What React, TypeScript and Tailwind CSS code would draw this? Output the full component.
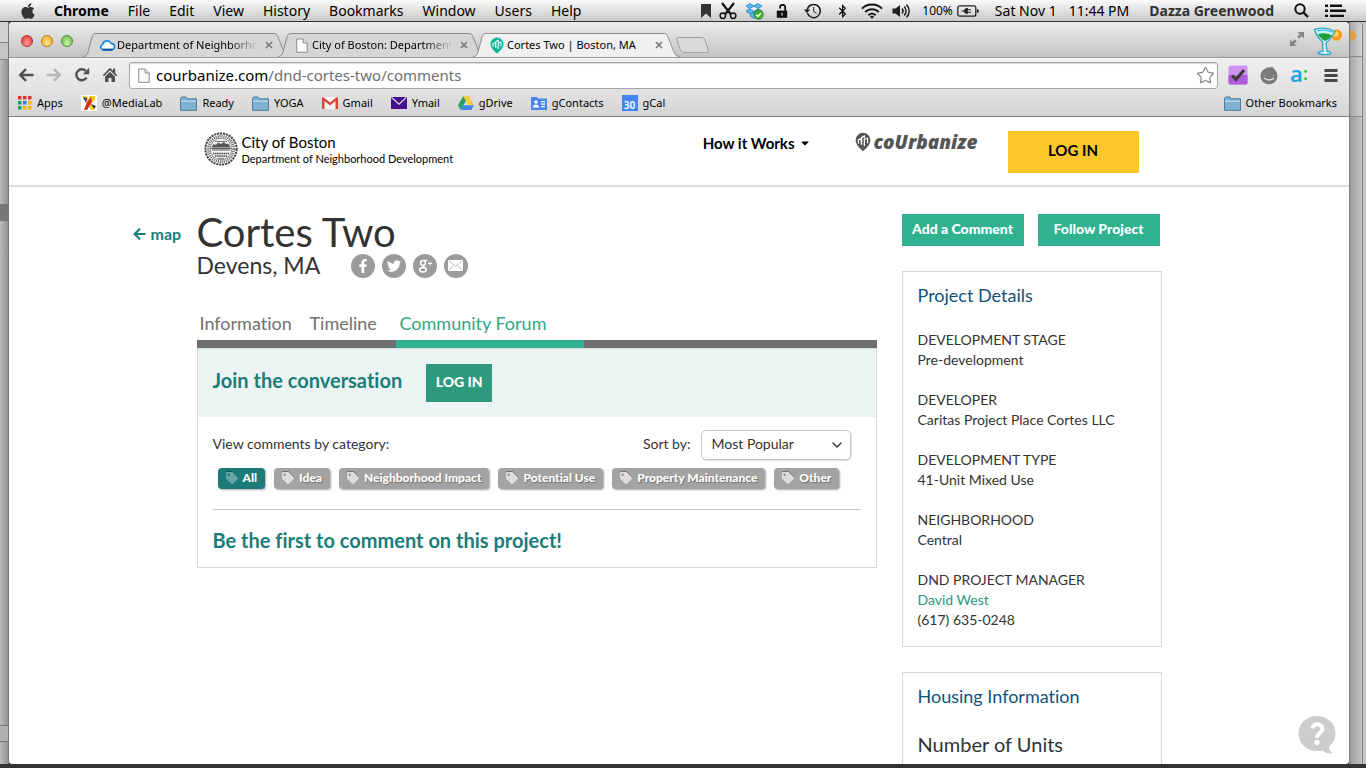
import type { ReactNode } from "react";
import { FaApple, FaArrowLeft, FaBluetoothB, FaCaretDown, FaFacebookF, FaTag, FaTwitter } from "react-icons/fa";
import { ChevronDown, Star } from "lucide-react";

const systemFont = "font-['Noto_Sans',sans-serif]";
const siteFont = "font-[Lato,sans-serif]";

/* ---------- menu bar ---------- */

const menus = ["File", "Edit", "View", "History", "Bookmarks", "Window", "Users", "Help"];

function ScissorsIcon() {
  return (
    <svg viewBox="0 0 18 18" className="h-[18px] w-[18px]" fill="none" stroke="#111">
      <path d="M3 1 L11.6 12 M15 1 L6.4 12" strokeWidth="2.2" />
      <circle cx="3.8" cy="13.8" r="2.7" strokeWidth="1.5" />
      <circle cx="14.2" cy="13.8" r="2.7" strokeWidth="1.5" />
    </svg>
  );
}

function DropboxIcon() {
  return (
    <svg viewBox="0 0 19 18" className="h-[18px] w-[19px]">
      <g fill="#5cbcf0" stroke="#1b83c9" strokeWidth=".8">
        <path d="M5 1.5 9 4 4.6 6.6 1 4z" />
        <path d="M12.5 1.5 8.8 4l4.4 2.6L17 4z" />
        <path d="M4.6 6.8 9 9.6 5.2 12 1 9.2z" />
        <path d="M13.2 6.8 8.8 9.6l3.8 2.4L17 9.2z" />
        <path d="M5.2 12.6 9 10.3l3.6 2.3v1.6L9 16.5l-3.8-2.3z" />
      </g>
      <path d="M6.500 6 L11.500 6 L9 7.800z" fill="#e4f5fd" />
      <circle cx="13.6" cy="12.6" r="4.7" fill="#3fae2a" stroke="#27801a" strokeWidth=".7" />
      <path d="M11.2 12.7l1.8 1.8 3-3.4" fill="none" stroke="#fff" strokeWidth="1.5" />
    </svg>
  );
}

function UnlockIcon() {
  return (
    <svg viewBox="0 0 12 14" className="h-[14px] w-[12px]">
      <path d="M.8 6.600h10.400v7.200H.8z" fill="#111" />
      <path d="M4 4.600V3.400A2.500 2.500 0 0 1 9.200 3.400V7" fill="none" stroke="#111" strokeWidth="1.800" />
      <path d="M5.400 9h1.200v2.600H5.400z" fill="#ddd" />
    </svg>
  );
}

function TimeMachineIcon() {
  return (
    <svg viewBox="0 0 18 16" className="h-[16px] w-[18px]" fill="none" stroke="#1a1a1a">
      <path d="M3.400 10.200A6.600 6.600 0 1 0 3.200 6.600" strokeWidth="1.500" />
      <path d="M0 6.400h6L3 10.2z" fill="#1a1a1a" stroke="none" />
      <path d="M9.7 4v4.400l2.800 2" strokeWidth="1" />
    </svg>
  );
}

function WifiIcon() {
  return (
    <svg viewBox="0 0 22 16" className="h-[16px] w-[22px]" fill="none" stroke="#111" strokeWidth="2">
      <path d="M1 5.600a14.400 14.400 0 0 1 20 0" />
      <path d="M4.200 9a9.800 9.800 0 0 1 13.600 0" />
      <path d="M7.400 12.200a5.200 5.200 0 0 1 7.200 0" />
      <path d="M11 15.800 9 13.800a2.900 2.900 0 0 1 4 0z" fill="#111" stroke="none" />
    </svg>
  );
}

function SoundIcon() {
  return (
    <svg viewBox="0 0 19 16" className="h-[16px] w-[19px]" fill="none" stroke="#222">
      <path d="M.5 5.400h3L8 2v12L3.500 10.600H.500z" fill="#222" stroke="none" />
      <path d="M10 5.600a3.500 3.500 0 0 1 0 4.800" strokeWidth="1.500" />
      <path d="M12.200 3.600a6.200 6.200 0 0 1 0 8.800" strokeWidth="1.500" />
      <path d="M14.500 1.600a9 9 0 0 1 0 12.800" strokeWidth="1.500" />
    </svg>
  );
}

function BatteryIcon() {
  return (
    <svg viewBox="0 0 22 12" className="h-[12px] w-[22px]">
      <rect x=".8" y=".8" width="18" height="10.400" rx="2" fill="none" stroke="#222" strokeWidth="1.300" />
      <path d="M20 4v4c1.300 0 1.800-1 1.800-2S21.300 4 20 4z" fill="#222" />
      <path d="M4.500 5.400h2.400C7.600 3.500 9 3 10.800 3V4.300H14v1H10.800v1.400H14v1H10.800V9C9 9 7.600 8.500 6.900 6.600H4.500z" fill="#222" />
    </svg>
  );
}

function MenuBar() {
  return (
    <header className={`${systemFont} flex h-[22px] shrink-0 items-center border-b border-[#2c3036] bg-linear-to-b from-[#fafafa] to-[#c9c9c9] pr-5 pl-5 text-sm leading-5 whitespace-nowrap text-black`}>
      <FaApple className="h-[18px] w-[16px] shrink-0 text-[#333]" aria-hidden />
      <nav className="ml-[18px] flex gap-[19px]">
        <button className="font-bold">Chrome</button>
        {menus.map((m) => (
          <button key={m}>{m}</button>
        ))}
      </nav>
      <div className="ml-auto flex items-center">
        <svg viewBox="0 0 10 14" className="h-[14px] w-[10px]"><path d="M0 0h10v14L5 9.500 0 14z" fill="#333" /></svg>
        <span className="ml-2"><ScissorsIcon /></span>
        <span className="ml-2"><DropboxIcon /></span>
        <span className="ml-3"><UnlockIcon /></span>
        <span className="ml-4"><TimeMachineIcon /></span>
        <FaBluetoothB className="ml-[15px] h-[14px] w-[11px]" aria-hidden />
        <span className="ml-[13px]"><WifiIcon /></span>
        <span className="ml-[9px]"><SoundIcon /></span>
        <span className="ml-[11px] text-xs">100%</span>
        <span className="ml-1"><BatteryIcon /></span>
        <span className="ml-4">Sat Nov 1</span>
        <span className="ml-3">11:44 PM</span>
        <button className="ml-5 font-bold text-[#333]">Dazza Greenwood</button>
        <svg viewBox="0 0 15 15" className="ml-5 h-[15px] w-[15px]" fill="none" stroke="#111" strokeWidth="2">
          <circle cx="6" cy="6" r="4.700" />
          <path d="M9.400 9.400 14 14" strokeWidth="2.400" />
        </svg>
        <svg viewBox="0 0 21 14" className="ml-4 h-[14px] w-[21px]" fill="#111">
          <path d="M0 .5h3v2.400H0zM5 .5h12v2.400H5zM0 5.600h3V8H0zM5 5.600h16V8H5zM0 10.700h3v2.400H0zM5 10.700h14v2.400H5z" />
        </svg>
      </div>
    </header>
  );
}

/* ---------- browser chrome ---------- */

function PageIcon() {
  return (
    <svg viewBox="0 0 12 15" className="h-[15px] w-[12px] shrink-0">
      <path d="M.7 1h6.500l4 4v9.300H.7z" fill="#fbfbfb" stroke="#8b8b8b" />
      <path d="M7.200 1v4h4" fill="#e4e4e4" stroke="#8b8b8b" />
    </svg>
  );
}

function CloudIcon() {
  return (
    <svg viewBox="0 0 17 12" className="h-[12px] w-[17px] shrink-0">
      <path d="M3.800 10.700A2.700 2.700 0 0 1 3.600 5.500 4.600 4.600 0 0 1 12.200 4.300a3.300 3.300 0 0 1 1.200 6.400z" fill="#fff" stroke="#1d8fe0" strokeWidth="1.800" />
      <path d="M3.500 10.700h10" stroke="#12539c" strokeWidth="2" />
    </svg>
  );
}

function PinMark({ className, fill, line }: { className: string; fill: string; line: string }) {
  return (
    <svg viewBox="0 0 14 17" className={className}>
      <path d="M7 .5A6.500 6.500 0 0 1 13.500 7c0 3.600-3.500 7-6.500 9.500C4 14 .5 10.600.5 7A6.500 6.500 0 0 1 7 .5z" fill={fill} />
      <path d="M3 10V6.500l2.500-1V10M5.800 11V4.500l2.400-1.300V5M8.200 12V6l2.800-.8V9.500" fill="none" stroke={line} strokeWidth="1.100" />
    </svg>
  );
}

function BrowserTab({ title, icon, active = false }: { title: string; icon: ReactNode; active?: boolean }) {
  return (
    <div className={active ? "relative z-10 -ml-3 flex h-[24px] w-[207px] items-center pr-[17px] pl-4" : "relative -ml-3 flex h-[24px] w-[207px] items-center pr-[17px] pl-4"}>
      <svg viewBox="0 0 207 24" preserveAspectRatio="none" className="absolute inset-0 h-full w-full" aria-hidden>
        <path d="M0 24C3 24 4 22 5 19L9 4C10 1 11 .5 14 .5H190C193 .5 194 1 195 4L201 19C202 22 204 24 207 24z" fill={active ? "#f0f0f0" : "#d6d6d6"} />
        <path d="M0 23.500C3 23.500 4 22 5 19L9 4C10 1 11 .5 14 .5H190C193 .5 194 1 195 4L201 19C202 22 204 23.500 207 23.500" fill="none" stroke="#8e8e8e" />
      </svg>
      <span className="relative flex w-4 shrink-0 justify-center">{icon}</span>
      <span className={active ? "relative ml-[2px] flex-1 text-[11px] whitespace-nowrap" : "relative ml-[2px] flex-1 mask-r-from-80% text-[11px] whitespace-nowrap"}>{title}</span>
      <button aria-label={`Close ${title}`} className="relative ml-[7px] shrink-0">
        <svg viewBox="0 0 8 8" className="h-2 w-2" stroke="#777" strokeWidth="1.500"><path d="M1 1l6 6M7 1L1 7" /></svg>
      </button>
    </div>
  );
}

function CocktailIcon() {
  return (
    <svg viewBox="0 0 30 30" className="h-[30px] w-[30px]">
      <circle cx="23.500" cy="9" r="5.500" fill="#f79a16" />
      <circle cx="22.500" cy="8" r="3" fill="#ffd24d" />
      <path d="M1.500 3.500 Q12 0 22 5.500 Q18 13 13 17 L14 25 Q19 26 17 28 Q11 29.500 5 27.500 Q5 25.500 10 25 L9.500 16 Q3 10 1.500 3.500z" fill="#c8f3fa" stroke="#36a9c9" strokeWidth="1.400" />
      <path d="M5 8 Q13 6 19 9.500 Q15 14 12 15 Q7 12.500 5 8z" fill="#1f9d3c" />
      <path d="M4 4.800 Q12 2.800 19.500 6.200" fill="none" stroke="#3fc1e0" strokeWidth="1.300" />
    </svg>
  );
}

function TabStrip() {
  return (
    <div className="flex h-[36px] shrink-0 items-end border-b border-[#989898] bg-linear-to-b from-[#ededed] to-[#c3c3c3]">
      <div className="flex w-[86px] shrink-0 gap-2 self-start pt-[13px] pl-3">
        <span className="h-3 w-3 rounded-full border border-[#b3302f] bg-radial-[at_50%_75%] from-[#ff9d95] to-[#df2f30]" />
        <span className="h-3 w-3 rounded-full border border-[#bb7c18] bg-radial-[at_50%_75%] from-[#ffe88e] to-[#f0a21d]" />
        <span className="h-3 w-3 rounded-full border border-[#4b8f36] bg-radial-[at_50%_75%] from-[#c7f5a8] to-[#5cb848]" />
      </div>
      <div className="flex flex-1">
        <BrowserTab title="Department of Neighborho" icon={<CloudIcon />} />
        <BrowserTab title="City of Boston: Department" icon={<PageIcon />} />
        <BrowserTab title="Cortes Two | Boston, MA" icon={<PinMark className="h-[17px] w-[14px] shrink-0" fill="#10b394" line="#fff" />} active />
        <button aria-label="New tab" className="-ml-[5px] mt-1 self-start">
          <svg viewBox="0 0 34 16" className="h-4 w-[34px]"><path d="M2 3C1 1 2 .5 4 .5H26C28 .5 29 1 30 3L33 12C34 14.500 33 15.500 31 15.500H10C7.500 15.500 6 14.500 5 12z" fill="#d9dbda" stroke="#9c9c9c" /></svg>
        </button>
      </div>
      <svg viewBox="0 0 16 16" className="mb-[10px] h-4 w-4" fill="#858585">
        <path d="M8.500 1H15v6.500L12.700 5.200 10.200 7.700 8.300 5.800 10.800 3.300zM7.500 15H1V8.500L3.300 10.800 5.800 8.300 7.700 10.200 5.200 12.700z" />
      </svg>
      <span className="mr-[6px] mb-[1px] ml-2"><CocktailIcon /></span>
    </div>
  );
}

function NavArrow({ className, label }: { className: string; label: string }) {
  return (
    <button aria-label={label} className={className}>
      <svg viewBox="0 0 16 14" className="h-[14px] w-[16px]" fill="none" stroke="currentColor" strokeWidth="2.400"><path d="M15.500 7H3M8 1.200 2.200 7 8 12.800" /></svg>
    </button>
  );
}

function Toolbar() {
  return (
    <div className="flex h-8 shrink-0 items-center border-t border-[#f6f6f6] bg-linear-to-b from-[#efefef] to-[#e2e2e2] pt-[1px] pr-[11px] pl-[9px]">
      <NavArrow label="Back" className="text-[#505050]" />
      <NavArrow label="Forward" className="ml-3 rotate-180 text-[#b5b5b5]" />
      <button aria-label="Reload" className="ml-3 text-[#505050]">
        <svg viewBox="0 0 16 16" className="h-4 w-4"><path d="M12.600 10.500A5.500 5.500 0 1 1 11.800 4" fill="none" stroke="currentColor" strokeWidth="2.400" /><path d="M15.200.8V7.200H8.800z" fill="currentColor" /></svg>
      </button>
      <button aria-label="Home" className="ml-3 text-[#505050]">
        <svg viewBox="0 0 16 16" className="h-4 w-4" fill="currentColor"><path d="M8 .8 .8 8.300 2 9.300 8 3.200l6 6.100 1.200-1L13.200 6V1.500H11V3.800zM3 9.800 8 4.800l5 5V15H9.500V11h-3v4H3z" /></svg>
      </button>
      <div className="ml-[11px] flex h-[27px] flex-1 items-center rounded-[3px] border border-[#a8a8a8] bg-white pr-[2px] pl-2 shadow-[inset_0_1px_1px_rgba(0,0,0,0.15)]">
        <PageIcon />
        <span className="relative ml-[6px] flex flex-1 text-[15px] leading-5 text-black">
          <span aria-hidden>courbanize.com<span className="text-[#6f6f6f]">/dnd-cortes-two/comments</span></span>
          <input className="absolute inset-0 w-full bg-transparent text-transparent outline-none" type="text" aria-label="Address" />
        </span>
        <Star className="h-[19px] w-[19px] text-[#858585]" strokeWidth={1.5} aria-hidden />
      </div>
      <button aria-label="Tasks extension" className="ml-[10px]">
        <svg viewBox="0 0 20 20" className="h-5 w-5"><rect x=".5" y=".5" width="19" height="19" rx="2" fill="#cf92ee" /><path d="M.5 10h19v8a1.500 1.500 0 0 1-1.500 1.500H2A1.500 1.500 0 0 1 .5 18z" fill="#b25be0" /><path d="M4 10.500 8 14.500 16 5" fill="none" stroke="#3b3b3b" strokeWidth="3" /></svg>
      </button>
      <button aria-label="Face extension" className="ml-3">
        <svg viewBox="0 0 18 19" className="h-[19px] w-[18px]"><path d="M9 1C10 2 11 1.500 12 .5 12.500 2 17.500 4.500 17.500 10.500A8.500 7.800 0 0 1 .5 10.500C.5 5 5 2 9 1z" fill="#7a7a7a" /><path d="M4 12q5 4 10 0" fill="none" stroke="#e2e2e2" strokeWidth="1.300" /><path d="M3.500 9.500h2M12.500 9.500h2" stroke="#a5a5a5" /></svg>
      </button>
      <button className="ml-3 flex w-[20px] items-center pb-1 text-[22px] leading-5 font-semibold text-[#1fa6df]">a<span className="text-lg text-[#37c32c]">:</span></button>
      <button aria-label="Chrome menu" className="ml-[14px]">
        <svg viewBox="0 0 14 13" className="h-[13px] w-[14px]" fill="#484848"><path d="M.5 0h13v3H.5zM.5 5h13v3H.5zM.5 10h13v3H.5z" /></svg>
      </button>
    </div>
  );
}

function FolderIcon() {
  return (
    <svg viewBox="0 0 17 15" className="h-[15px] w-[17px]">
      <path d="M.5 14.300V2.500L1.500 1H6l1 1.800h9.500V14.300z" fill="#82b0d0" stroke="#4f7f9f" />
      <path d="M1 4.500h15v1.500H1z" fill="#b4d2e5" />
    </svg>
  );
}

function AppsIcon() {
  const colours = ["#e8302b", "#e8302b", "#e8302b", "#18a05f", "#3b78e7", "#f5b400", "#18a05f", "#f5b400", "#f5b400"];
  return (
    <svg viewBox="0 0 14 14" className="h-[14px] w-[14px]">
      {colours.map((c, i) => (
        <rect key={i} x={(i % 3) * 5} y={Math.floor(i / 3) * 5} width="3.500" height="3.500" fill={c} />
      ))}
    </svg>
  );
}

function MediaLabIcon() {
  return (
    <svg viewBox="0 0 16 16" className="h-4 w-4">
      <rect width="16" height="16" fill="#fff" />
      <path d="M1 1h5l8 14h-4z" fill="#f4d91b" />
      <path d="M8 1h6v4L9 9z" fill="#f6c915" />
      <path d="M6 7l4-5 1 5-5 8H3z" fill="#de2c22" />
      <path d="M2 2l4 1-1 5z" fill="#2c3b8b" />
      <path d="M10 9l5 2-2 3z" fill="#333" />
    </svg>
  );
}

function GmailIcon() {
  return (
    <svg viewBox="0 0 16 12" className="h-3 w-4">
      <rect width="16" height="12" rx="1" fill="#f4f4f4" />
      <path d="M0 1.200C0 .3 1 0 1.800.5L8 5.600 14.200.5C15 0 16 .3 16 1.200V12h-2.500V4L8 8.400 2.500 4V12H0z" fill="#dc4437" />
    </svg>
  );
}

function YmailIcon() {
  return (
    <svg viewBox="0 0 16 12" className="h-3 w-4">
      <rect width="16" height="12" fill="#45108b" />
      <path d="M.5.300 8 7.300 15.500.300" fill="none" stroke="#ddd" strokeWidth="1.200" />
    </svg>
  );
}

function DriveIcon() {
  return (
    <svg viewBox="0 0 16 14" className="h-[14px] w-4">
      <path d="M5.300 0 0 9.200 2.700 14 8 4.700z" fill="#21a464" />
      <path d="M5.300 0h5.400L16 9.200h-5.400z" fill="#fbcb38" />
      <path d="M5.400 9.200H16L13.300 14H2.700z" fill="#4284f2" />
    </svg>
  );
}

function ContactsIcon() {
  return (
    <svg viewBox="0 0 16 14" className="h-[14px] w-4">
      <path d="M0 1h6l1 1.500h9V14H0z" fill="#4a86ee" />
      <circle cx="5" cy="6" r="1.700" fill="#fff" />
      <path d="M2 11.500c0-4 6-4 6 0zM10 5h4v1.200h-4zM10 7.500h4v1.200h-4zM10 10h4v1.200h-4z" fill="#fff" />
    </svg>
  );
}

function CalendarIcon() {
  return (
    <span className="flex h-4 w-4 items-end justify-center bg-[#4285f4] text-[10px] leading-3 font-semibold text-white">30</span>
  );
}

const bookmarks: { label: string; icon: ReactNode }[] = [
  { label: "Apps", icon: <AppsIcon /> },
  { label: "@MediaLab", icon: <MediaLabIcon /> },
  { label: "Ready", icon: <FolderIcon /> },
  { label: "YOGA", icon: <FolderIcon /> },
  { label: "Gmail", icon: <GmailIcon /> },
  { label: "Ymail", icon: <YmailIcon /> },
  { label: "gDrive", icon: <DriveIcon /> },
  { label: "gContacts", icon: <ContactsIcon /> },
  { label: "gCal", icon: <CalendarIcon /> },
];

function BookmarksBar() {
  return (
    <nav className="flex h-[27px] shrink-0 items-center gap-[18px] border-b border-[#7d7d7d] bg-linear-to-b from-[#e2e2e2] to-[#d4d4d4] pr-3 pl-[9px] text-[11px] leading-4 whitespace-nowrap">
      {bookmarks.map((b) => (
        <a key={b.label} href="#" className="flex items-center gap-[5px]">
          {b.icon}
          <span>{b.label}</span>
        </a>
      ))}
      <a href="#" className="ml-auto flex items-center gap-[5px]">
        <FolderIcon />
        <span>Other Bookmarks</span>
      </a>
    </nav>
  );
}

/* ---------- site ---------- */

function CitySeal() {
  return (
    <svg viewBox="0 0 34 34" className="h-[34px] w-[34px]" fill="none" stroke="#444">
      <circle cx="17" cy="17" r="15.600" strokeWidth="2" strokeDasharray="2.200 .8" />
      <circle cx="17" cy="17" r="12.700" strokeWidth="2.600" strokeDasharray="1.100 .9" stroke="#666" />
      <circle cx="17" cy="17" r="10.800" strokeWidth=".6" fill="#f4f4f4" />
      <path d="M8 14l2-2 2 1 2-2.500 3 1.500 3-2 2 2 2-.500 2 2.500v1.500H8z" fill="#555" stroke="none" />
      <path d="M7 16.500h20M8 18h18" strokeWidth=".9" />
      <path d="M9 21.500h16M11 24h12" strokeWidth="1.500" strokeDasharray="1.500 .6" />
      <path d="M14 26.300h6M11 9.500h12" strokeWidth=".7" />
    </svg>
  );
}

function SiteHeader() {
  return (
    <div className="shrink-0 border-b-2 border-[#dcdcdc]">
      <div className="mx-auto flex h-[68px] w-full max-w-[965px] items-start pr-[23px] pl-[7px]">
        <a href="#" className="mt-[15px] flex gap-1 text-black">
          <CitySeal />
          <span className="flex flex-col pt-[1px]">
            <span className="text-[15px] leading-[18px]">City of Boston</span>
            <span className="text-[11px] leading-[15px]">Department of Neighborhood Development</span>
          </span>
        </a>
        <button className="mt-4 ml-auto flex items-center gap-[7px] text-[15px] leading-5 font-bold text-black">
          How it Works <FaCaretDown className="h-3 w-2" aria-hidden />
        </button>
        <a href="#" className="mt-[15px] ml-[46px] flex items-center gap-[2px] font-['Open_Sans',sans-serif] text-[19px] leading-5 font-extrabold text-[#555] italic">
          <PinMark className="h-5 w-4 shrink-0" fill="#555" line="#fff" />
          coUrbanize
        </a>
        <button className="mt-[14px] ml-[30px] h-[42px] w-[131px] bg-[#fdc72c] pb-[3px] text-[15px] font-bold text-black">LOG IN</button>
      </div>
    </div>
  );
}

function GooglePlusGlyph() {
  return (
    <svg viewBox="0 0 16 16" className="h-4 w-4" fill="none" stroke="#fff">
      <circle cx="6" cy="5" r="2.400" strokeWidth="1.500" />
      <path d="M7.500 2.400h3M7.500 7.300C5.500 8.300 7 9 8.200 9.800" strokeWidth="1.300" />
      <ellipse cx="6" cy="11.800" rx="3.300" ry="2.300" strokeWidth="1.500" />
      <path d="M13 3.500v4M11 5.500h4" strokeWidth="1" />
    </svg>
  );
}

function MailGlyph() {
  return (
    <svg viewBox="0 0 15 11" className="h-[11px] w-[15px]">
      <rect width="15" height="11" rx="1" fill="#fff" />
      <path d="M1 1l6.500 5.500L14 1M1 10l4.500-4.500M14 10 9.500 5.500" fill="none" stroke="#c4c4c4" />
    </svg>
  );
}

const shares = [
  { label: "Facebook", icon: <FaFacebookF className="h-[14px] w-[14px]" aria-hidden /> },
  { label: "Twitter", icon: <FaTwitter className="h-[14px] w-[14px]" aria-hidden /> },
  { label: "Google Plus", icon: <GooglePlusGlyph /> },
  { label: "Email", icon: <MailGlyph /> },
];

const categories = ["All", "Idea", "Neighborhood Impact", "Potential Use", "Property Maintenance", "Other"];

function CategoryTag({ label, active }: { label: string; active: boolean }) {
  return (
    <button className={active
      ? "flex h-[21px] items-center gap-[5px] rounded-[4px] bg-[#1a7b79] px-2 pb-[1px] text-xs font-black whitespace-nowrap text-white shadow-[1px_1px_2px_rgba(0,0,0,0.35)]"
      : "flex h-[21px] items-center gap-[5px] rounded-[4px] bg-[#a3a3a3] px-2 pb-[1px] text-xs font-black whitespace-nowrap text-white shadow-[1px_1px_2px_rgba(0,0,0,0.35)] text-shadow-[1px_1px_1px_rgba(0,0,0,0.3)]"}>
      <FaTag className={active
        ? "h-3 w-3 text-[#65a9a7] drop-shadow-[0_-1px_0_rgba(0,0,0,0.3)]"
        : "h-3 w-3 text-[#dedede] drop-shadow-[0_-1px_0_rgba(0,0,0,0.3)]"} aria-hidden />
      {label}
    </button>
  );
}

function Forum() {
  return (
    <section className="border border-[#d9d9d9]">
      <div className="flex h-[68px] items-center gap-[24px] bg-[#ebf4f3] pl-[15px]">
        <h2 className="pb-[6px] text-[20px] leading-6 font-bold text-[#1a7d7a]">Join the conversation</h2>
        <button className="h-[38px] w-[66px] bg-[#2d9a7d] pb-[2px] text-sm font-black text-white">LOG IN</button>
      </div>
      <div className="px-[15px] pt-[13px] pb-[15px]">
        <div className="flex h-[30px] items-center pr-[10px] text-sm">
          <span className="pb-[2px]">View comments by category:</span>
          <label htmlFor="sort" className="ml-auto pb-[2px]">Sort by:</label>
          <span className="relative ml-[10px] flex items-center">
            <select id="sort" className="h-[30px] w-[150px] appearance-none rounded-[5px] border border-[#c6c6c6] bg-white pb-[2px] pl-[10px] text-sm shadow-[1px_1px_1px_rgba(0,0,0,0.12)]">
              <option>Most Popular</option>
            </select>
            <ChevronDown className="pointer-events-none absolute right-[6px] h-4 w-4" aria-hidden />
          </span>
        </div>
        <div className="mt-2 flex gap-[9px] pl-[5px]">
          {categories.map((c, i) => (
            <CategoryTag key={c} label={c} active={i === 0} />
          ))}
        </div>
        <hr className="mt-5 border-[#c9c9c9]" />
        <p className="mt-[18px] text-[20px] leading-6 font-bold text-[#1a7d7a]">Be the first to comment on this project!</p>
      </div>
    </section>
  );
}

const details = [
  { label: "DEVELOPMENT STAGE", value: "Pre-development" },
  { label: "DEVELOPER", value: "Caritas Project Place Cortes LLC" },
  { label: "DEVELOPMENT TYPE", value: "41-Unit Mixed Use" },
  { label: "NEIGHBORHOOD", value: "Central" },
];

function Sidebar() {
  return (
    <aside className="w-[260px] shrink-0">
      <div className="flex gap-[14px] text-sm font-black text-white">
        <button className="h-8 w-[122px] bg-[#30b290] pb-[2px]">Add a Comment</button>
        <button className="h-8 w-[122px] bg-[#30b290] pb-[2px]">Follow Project</button>
      </div>
      <section className="mt-[25px] border border-[#d6d6d6] px-[15px] pt-[11px] pb-4">
        <h3 className="text-[18px] leading-6 text-[#10527b]">Project Details</h3>
        <dl className="mt-[23px] flex flex-col gap-5 text-sm leading-5">
          {details.map((d) => (
            <div key={d.label}>
              <dt>{d.label}</dt>
              <dd>{d.value}</dd>
            </div>
          ))}
          <div>
            <dt>DND PROJECT MANAGER</dt>
            <dd><a href="#" className="text-[#2b9a7c]">David West</a></dd>
            <dd>(617) 635-0248</dd>
          </div>
        </dl>
      </section>
      <section className="mt-[25px] border border-[#d6d6d6] px-[15px] pt-[11px] pb-8">
        <h3 className="text-[18px] leading-6 text-[#10527b]">Housing Information</h3>
        <h4 className="mt-6 text-[20px] leading-6">Number of Units</h4>
      </section>
    </aside>
  );
}

function ProjectPage() {
  return (
    <main className="min-h-0 flex-1 overflow-hidden">
      <div className="mx-auto flex w-full max-w-[965px] items-start pt-[27px]">
        <div className="w-[680px] shrink-0">
          <div className="-ml-[64px] flex items-start">
            <a href="#" className="mt-[10px] flex w-[64px] shrink-0 items-center gap-[5px] text-base leading-5 font-bold text-[#1a7d7a]">
              <FaArrowLeft className="h-[14px] w-[13px]" aria-hidden />
              map
            </a>
            <div>
              <h1 className="text-[40px] leading-9">Cortes Two</h1>
              <div className="mt-[3px] flex items-center">
                <p className="w-[154px] text-[23px] leading-[25px]">Devens, MA</p>
                <div className="flex gap-[7px]">
                  {shares.map((s) => (
                    <a key={s.label} href="#" aria-label={s.label} className="flex h-6 w-6 items-center justify-center rounded-full bg-[#9b9b9b] text-white">{s.icon}</a>
                  ))}
                </div>
              </div>
            </div>
          </div>
          <nav className="mt-[35px] flex border-b-8 border-[#6f6f6f] text-[18px] leading-5 text-[#707070]">
            <a href="#" className="h-[27px] w-[110px] pl-[3px]">Information</a>
            <a href="#" className="h-[27px] w-[89px] pl-[3px]">Timeline</a>
            <a href="#" className="-mb-2 h-[35px] w-[188px] border-b-8 border-[#30b290] pl-1 text-[#30a886]">Community Forum</a>
          </nav>
          <Forum />
        </div>
        <div className="ml-[25px]">
          <Sidebar />
        </div>
      </div>
    </main>
  );
}

function HelpBubble() {
  return (
    <button aria-label="Help" className="absolute right-[13px] bottom-[10px]">
      <svg viewBox="0 0 38 38" className="h-[38px] w-[38px]">
        <path d="M19 0C29.500 0 37.500 7.500 37.500 17.500 37.500 23 35 27 31 30.500 31 34 33 36 34.500 37 31 38.500 27 37 25 34.500 11 37.500.500 29 .500 17.500.500 7.500 8.500 0 19 0z" fill="#cdcdcd" />
        <path d="M14.300 12.500C15 6.800 24.300 7 24.300 13 24.300 17 19 17 19 22" fill="none" stroke="#fff" strokeWidth="4" />
        <circle cx="19" cy="26.300" r="2.600" fill="#fff" />
      </svg>
    </button>
  );
}

function LeftBackdrop() {
  return (
    <div className="flex w-[9px] shrink-0 flex-col border-r border-[#777] bg-linear-to-r from-[#bcbcbc] to-[#929292]">
      <span className="h-[21px] border-b border-[#888] bg-[#d1d1d1]" />
      <span className="h-[17px] border-b border-[#888] bg-[#c4c4c4]" />
      <span className="mt-36 h-[17px] bg-[#777]" />
      <span className="mt-auto mb-[22px] h-[17px] border-y border-[#777] bg-[#b0b0b0]" />
    </div>
  );
}

function RightBackdrop() {
  return (
    <div className="flex w-[17px] shrink-0 bg-[#c9c9c9]">
      <div className="flex w-[14px] flex-col overflow-hidden rounded-tr-[4px] border-r border-l border-[#808080] bg-linear-to-r from-[#9c9c9c] to-[#c2c2c2]">
        <span className="flex h-[35px] items-start border-b border-[#8a8a8a] bg-linear-to-r from-[#a9a9a9] to-[#d5d5d5] pt-2">
          <span className="h-[11px] w-[6px] rounded-r-full bg-[#dfa03c]" />
        </span>
        <span className="h-[60px] border-b border-[#8a8a8a] bg-linear-to-r from-[#a5a5a5] to-[#d0d0d0]" />
      </div>
    </div>
  );
}

export default function App() {
  return (
    <div className="flex h-screen flex-col overflow-hidden bg-[#333]">
      <MenuBar />
      <div className="flex min-h-0 flex-1 bg-[#333] pb-1">
        <LeftBackdrop />
        <div className="relative flex min-w-0 flex-1 flex-col overflow-hidden rounded-t-[4px] rounded-b-[3px] bg-white">
          <div className={`${systemFont} flex shrink-0 flex-col text-black`}>
            <TabStrip />
            <Toolbar />
            <BookmarksBar />
          </div>
          <div className={`${siteFont} flex min-h-0 flex-1 flex-col text-[#333] [font-variant-ligatures:none]`}>
            <SiteHeader />
            <ProjectPage />
          </div>
          <HelpBubble />
        </div>
        <RightBackdrop />
      </div>
    </div>
  );
}
